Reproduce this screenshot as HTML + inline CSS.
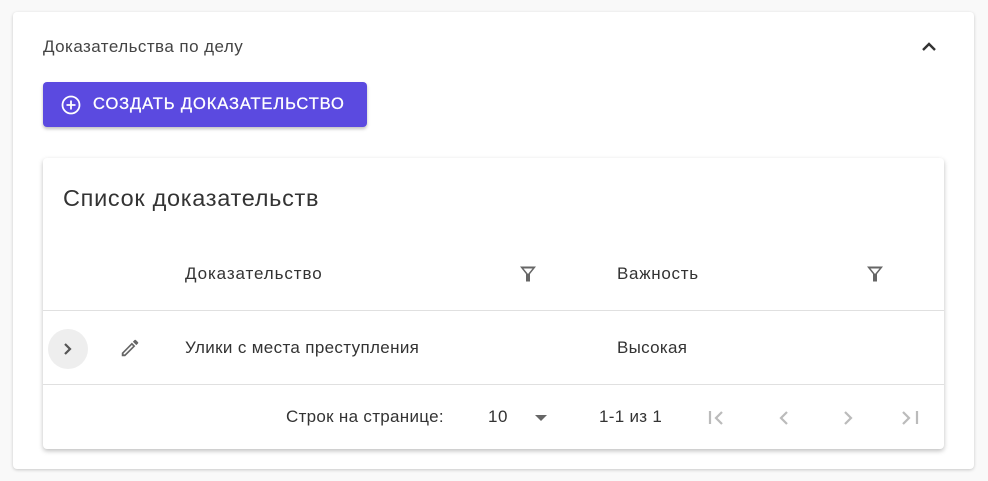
<!DOCTYPE html>
<html><head><meta charset="utf-8"><style>
*{box-sizing:border-box;margin:0;padding:0}
body{width:988px;height:481px;background:#f9f9f9;font-family:"Liberation Sans",sans-serif;color:#333;position:relative;overflow:hidden}
.outer{position:absolute;left:13px;top:12px;width:961px;height:457px;background:#fff;border-radius:4px;box-shadow:0 1px 3px rgba(0,0,0,.2)}
.t{position:absolute;white-space:nowrap}
.f{font-size:17px;letter-spacing:0.55px}
.btn{position:absolute;left:43px;top:82px;width:324px;height:45px;background:#5b4ae0;border-radius:4px;box-shadow:0 2px 3px rgba(0,0,0,.25);color:#fff;font-size:16.5px;letter-spacing:0.9px}
.inner{position:absolute;left:43px;top:158px;width:901px;height:291px;background:#fff;border-radius:4px;box-shadow:0 2px 5px rgba(0,0,0,.25)}
.line{position:absolute;left:0;width:901px;height:1px;background:#e0e0e0}
</style></head><body>
<div class="outer"></div>
<div class="t f" style="left:43px;top:37px;color:#444;letter-spacing:0.45px">Доказательства по делу</div>
<svg class="t" style="left:920px;top:40px" width="18" height="12" viewBox="0 0 18 12"><path d="M3 10 L9 4 L15 10" fill="none" stroke="#333" stroke-width="2.4"/></svg>
<div class="btn">
<svg class="t" style="left:18px;top:13px" width="20" height="20" viewBox="0 0 20 20"><circle cx="10" cy="10" r="8.5" fill="none" stroke="#fff" stroke-width="1.8"/><path d="M10 5.5V14.5M5.5 10H14.5" stroke="#fff" stroke-width="1.8"/></svg>
<div class="t" style="left:50px;top:13px;-webkit-text-stroke:0.3px #fff">СОЗДАТЬ ДОКАЗАТЕЛЬСТВО</div>
</div>
<div class="inner">
<div class="t" style="left:20px;top:27px;font-size:23.5px;letter-spacing:0.7px;color:#333">Список доказательств</div>
<div class="t f" style="left:142px;top:106px;letter-spacing:0.9px">Доказательство</div>
<svg class="t" style="left:476px;top:107px" width="18" height="18" viewBox="0 0 18 18"><path d="M1 1.5h16l-6 7.5v7.5h-4v-7.5z" fill="#666"/><path d="M4.5 3.5h9l-4.5 5.5z" fill="#fff"/></svg>
<div class="t f" style="left:574px;top:106px;letter-spacing:0.7px">Важность</div>
<svg class="t" style="left:823px;top:107px" width="18" height="18" viewBox="0 0 18 18"><path d="M1 1.5h16l-6 7.5v7.5h-4v-7.5z" fill="#666"/><path d="M4.5 3.5h9l-4.5 5.5z" fill="#fff"/></svg>
<div class="line" style="top:152px"></div>
<div class="t" style="left:5px;top:171px;width:40px;height:40px;border-radius:50%;background:#eee"></div>
<svg class="t" style="left:18px;top:183px" width="14" height="16" viewBox="0 0 14 16"><path d="M4 3l5 5-5 5" fill="none" stroke="#555" stroke-width="2.2"/></svg>
<svg class="t" style="left:76px;top:179px" width="22" height="22" viewBox="0 0 24 24"><path d="M3 17.25V21h3.75L17.81 9.94l-3.75-3.75L3 17.25zM20.71 7.04a1 1 0 0 0 0-1.41l-2.34-2.34a1 1 0 0 0-1.41 0l-1.83 1.83 3.75 3.75 1.83-1.83z" fill="#666"/><path d="M5 19v-1.2L14.06 8.7l1.2 1.2L6.2 19z" fill="#fff"/></svg>
<div class="t f" style="left:142px;top:180px;letter-spacing:0.35px">Улики с места преступления</div>
<div class="t f" style="left:574px;top:180px;letter-spacing:0.3px">Высокая</div>
<div class="line" style="top:226px"></div>
<div class="t f" style="left:243px;top:249px;letter-spacing:0.3px">Строк на странице:</div>
<div class="t f" style="left:445px;top:249px">10</div>
<svg class="t" style="left:492px;top:256px" width="12" height="8"><path d="M0 1h12L6 7z" fill="#666"/></svg>
<div class="t f" style="left:556px;top:249px;letter-spacing:0.3px">1-1 из 1</div>
<svg class="t" style="left:664px;top:250px" width="20" height="20" viewBox="0 0 20 20"><path d="M3 3v13M15 4l-6 6 6 6" fill="none" stroke="#bbb" stroke-width="2.2"/></svg>
<svg class="t" style="left:731px;top:250px" width="20" height="20" viewBox="0 0 20 20"><path d="M13 4l-6 6 6 6" fill="none" stroke="#bbb" stroke-width="2.2"/></svg>
<svg class="t" style="left:795px;top:250px" width="20" height="20" viewBox="0 0 20 20"><path d="M7 4l6 6-6 6" fill="none" stroke="#bbb" stroke-width="2.2"/></svg>
<svg class="t" style="left:858px;top:250px" width="20" height="20" viewBox="0 0 20 20"><path d="M2 4l6 6-6 6M16 3v13" fill="none" stroke="#bbb" stroke-width="2.2"/></svg>
</div>
</body></html>
